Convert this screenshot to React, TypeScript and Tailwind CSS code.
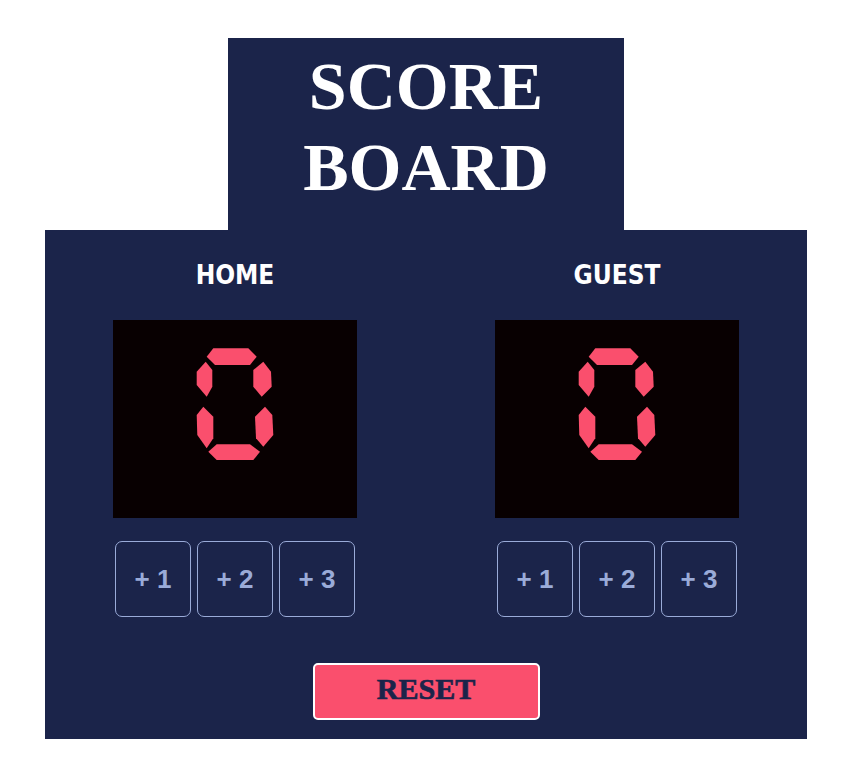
import React, { useState } from "react";

const SEGMENTS = {
  a: "11.7,9.7 18.3,1.3 53.3,1.3 61.7,9.7 55,18 20,18",
  f: "10.7,14.7 17.3,23 17.3,39.7 11.7,49.7 1.7,38 1.7,24.7",
  b: "68.3,14.7 58.3,23 58.3,39.7 66.7,49.7 76.7,39.7 76,24.7",
  e: "8.3,59.7 18.3,69.7 18.3,91.3 11.7,101.3 2.3,88 1.7,68",
  c: "70,59.7 60,69.7 61,91.3 68.3,99.7 78.3,88 77.3,68",
  d: "13.3,104.7 21.7,97.3 55,97.3 65,104.7 58.3,113 21.7,113",
  g: "14,55.5 20,51 58,51 64,55.5 58,60 20,60",
};

const DIGITS: Record<string, (keyof typeof SEGMENTS)[]> = {
  "0": ["a", "b", "c", "d", "e", "f"],
  "1": ["b", "c"],
  "2": ["a", "b", "g", "e", "d"],
  "3": ["a", "b", "g", "c", "d"],
  "4": ["f", "g", "b", "c"],
  "5": ["a", "f", "g", "c", "d"],
  "6": ["a", "f", "g", "e", "c", "d"],
  "7": ["a", "b", "c"],
  "8": ["a", "b", "c", "d", "e", "f", "g"],
  "9": ["a", "b", "c", "d", "f", "g"],
};

function Digit({ ch }: { ch: string }) {
  const segs = DIGITS[ch] ?? [];
  return (
    <svg width="80" height="116" viewBox="0 0 80 116" className="shrink-0">
      {segs.map((s) => (
        <polygon key={s} points={SEGMENTS[s]} fill="#FA4F6D" />
      ))}
    </svg>
  );
}

function Team({
  name,
  score,
  onAdd,
}: {
  name: string;
  score: number;
  onAdd: (n: number) => void;
}) {
  return (
    <div className="flex w-[244px] flex-col items-center">
      <h2 className="font-['DejaVu_Sans_Condensed','Liberation_Sans_Narrow','DejaVu_Sans',sans-serif] text-[26px] font-bold leading-[30px] text-white">
        {name}
      </h2>
      <div className="mt-[30px] flex h-[198px] w-[244px] justify-center gap-1 bg-[#080001] pt-[27px]">
        {String(score)
          .split("")
          .map((c, i) => (
            <Digit key={i} ch={c} />
          ))}
      </div>
      <div className="mt-[23px] flex gap-[6px]">
        {[1, 2, 3].map((n) => (
          <button
            key={n}
            onClick={() => onAdd(n)}
            className="flex h-[76px] w-[76px] items-center justify-center rounded-[7px] border border-[#9AABD8] bg-transparent font-['Liberation_Sans',Arial,sans-serif] text-[26px] font-bold text-[#9AABD8]"
          >
            + {n}
          </button>
        ))}
      </div>
    </div>
  );
}

export default function App() {
  const [home, setHome] = useState(0);
  const [guest, setGuest] = useState(0);

  return (
    <div className="min-h-[782px] bg-white pt-[38px]">
      <div className="ml-[45px] flex w-[762px] flex-col items-center">
        <div className="flex h-[192px] w-[396px] flex-col items-center bg-[#1B244A] pt-[8px]">
          <h1 className="text-center font-['Liberation_Serif','Times_New_Roman',serif] text-[68px] font-bold leading-[81px] text-white">
            SCORE
            <br />
            BOARD
          </h1>
        </div>
        <div className="flex w-[762px] flex-col items-center bg-[#1B244A] pb-[19px] pt-[30px]">
          <div className="flex w-full justify-between px-[68px]">
            <Team name="HOME" score={home} onAdd={(n) => setHome(home + n)} />
            <Team name="GUEST" score={guest} onAdd={(n) => setGuest(guest + n)} />
          </div>
          <button
            onClick={() => {
              setHome(0);
              setGuest(0);
            }}
            className="mt-[46px] flex h-[57px] w-[227px] items-center justify-center rounded-[5px] border-2 border-white bg-[#FA4F6D] pb-[6px] font-['Liberation_Serif','Times_New_Roman',serif] text-[30px] font-bold text-[#1B244A] [-webkit-text-stroke:0.7px_#1B244A]"
          >
            RESET
          </button>
        </div>
      </div>
    </div>
  );
}
